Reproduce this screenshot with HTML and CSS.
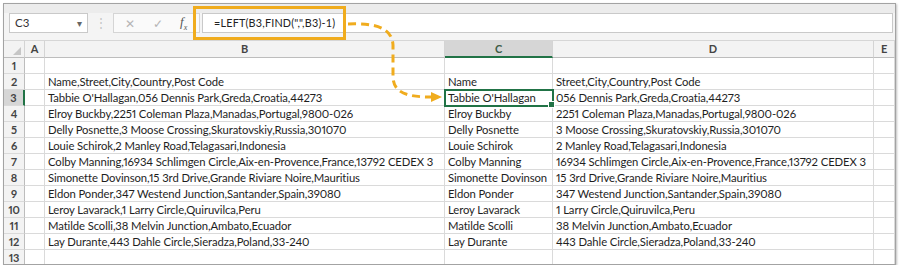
FILE: index.html
```html
<!DOCTYPE html>
<html lang="en">
<head>
    <meta charset="UTF-8">
    <title>LEFT / FIND - Excel</title>
    <link rel="stylesheet" href="styles.css">
</head>
<body>
    <div class="frame">
        <div class="fbar">
            <div class="namebox">C3 <span class="drop">&#9662;</span></div>
            <div class="sep">&#8942;</div>
            <div class="btns">
                <span class="btn">&#10005;</span>
                <span class="btn">&#10003;</span>
                <span class="fx">f<sub>x</sub></span>
            </div>
            <div class="formula">=LEFT(B3,FIND(",",B3)-1)</div>
        </div>

        <div class="sheet">
            <div class="hd corner"><span class="tri"></span></div>
            <div class="hd">A</div>
            <div class="hd">B</div>
            <div class="hd hd-sel">C</div>
            <div class="hd">D</div>
            <div class="hd">E</div>

            <div class="rh">1</div><div class="c"></div><div class="c"></div><div class="c"></div><div class="c"></div><div class="c"></div>
            <div class="rh">2</div><div class="c"></div><div class="c">Name,Street,City,Country,Post Code</div><div class="c">Name</div><div class="c">Street,City,Country,Post Code</div><div class="c"></div>
            <div class="rh rh-sel">3</div><div class="c"></div><div class="c">Tabbie O'Hallagan,056 Dennis Park,Greda,Croatia,44273</div><div class="c sel">Tabbie O'Hallagan</div><div class="c">056 Dennis Park,Greda,Croatia,44273</div><div class="c"></div>
            <div class="rh">4</div><div class="c"></div><div class="c">Elroy Buckby,2251 Coleman Plaza,Manadas,Portugal,9800-026</div><div class="c">Elroy Buckby</div><div class="c">2251 Coleman Plaza,Manadas,Portugal,9800-026</div><div class="c"></div>
            <div class="rh">5</div><div class="c"></div><div class="c">Delly Posnette,3 Moose Crossing,Skuratovskiy,Russia,301070</div><div class="c">Delly Posnette</div><div class="c">3 Moose Crossing,Skuratovskiy,Russia,301070</div><div class="c"></div>
            <div class="rh">6</div><div class="c"></div><div class="c">Louie Schirok,2 Manley Road,Telagasari,Indonesia</div><div class="c">Louie Schirok</div><div class="c">2 Manley Road,Telagasari,Indonesia</div><div class="c"></div>
            <div class="rh">7</div><div class="c"></div><div class="c">Colby Manning,16934 Schlimgen Circle,Aix-en-Provence,France,13792 CEDEX 3</div><div class="c">Colby Manning</div><div class="c">16934 Schlimgen Circle,Aix-en-Provence,France,13792 CEDEX 3</div><div class="c"></div>
            <div class="rh">8</div><div class="c"></div><div class="c">Simonette Dovinson,15 3rd Drive,Grande Riviare Noire,Mauritius</div><div class="c">Simonette Dovinson</div><div class="c">15 3rd Drive,Grande Riviare Noire,Mauritius</div><div class="c"></div>
            <div class="rh">9</div><div class="c"></div><div class="c">Eldon Ponder,347 Westend Junction,Santander,Spain,39080</div><div class="c">Eldon Ponder</div><div class="c">347 Westend Junction,Santander,Spain,39080</div><div class="c"></div>
            <div class="rh">10</div><div class="c"></div><div class="c">Leroy Lavarack,1 Larry Circle,Quiruvilca,Peru</div><div class="c">Leroy Lavarack</div><div class="c">1 Larry Circle,Quiruvilca,Peru</div><div class="c"></div>
            <div class="rh">11</div><div class="c"></div><div class="c">Matilde Scolli,38 Melvin Junction,Ambato,Ecuador</div><div class="c">Matilde Scolli</div><div class="c">38 Melvin Junction,Ambato,Ecuador</div><div class="c"></div>
            <div class="rh">12</div><div class="c"></div><div class="c">Lay Durante,443 Dahle Circle,Sieradza,Poland,33-240</div><div class="c">Lay Durante</div><div class="c">443 Dahle Circle,Sieradza,Poland,33-240</div><div class="c"></div>
            <div class="rh">13</div><div class="c"></div><div class="c"></div><div class="c"></div><div class="c"></div><div class="c"></div>
        </div>

        <!-- surlignage de la formule + fleche vers C3 -->
        <div class="callout"></div>
        <svg class="arrow" width="900" height="267" viewBox="0 0 900 267">
            <path d="M348,24 C374,23 392,27 393,45 L393,76 C393,92 405,97 431,97" fill="none" stroke="#f0ac1e" stroke-width="3" stroke-dasharray="8 5"/>
            <polygon points="431,92 442,97 431,102" fill="#f0ac1e"/>
        </svg>
    </div>
</body>
</html>
```

FILE: styles.css
```css
body {
    margin: 0;
    background: white;
    font-family: Lato, "Open Sans", sans-serif;
}
.frame {
    position: relative;
    box-sizing: border-box;
    width: 893px;
    height: 262px;
    margin: 3px 0 0 3px;
    border: 1px solid #a3a3a3;
    box-shadow: 1px 1px 2px rgba(0,0,0,0.25);
    overflow: hidden;
    background: white;
}
.fbar {
    display: flex;
    align-items: flex-start;
    height: 37px;
    box-sizing: border-box;
    padding: 9px 2px 0 5px;
    background: linear-gradient(#ececec 0, #ececec 9px, #f4f4f4 9px);
    border-bottom: 1px solid #d6d6d6;
}
.namebox {
    position: relative;
    box-sizing: border-box;
    width: 79px;
    height: 20px;
    padding-left: 5px;
    border: 1px solid #c9c9c9;
    background: white;
    font-size: 11.5px;
    line-height: 18px;
    color: #333;
}
.drop {
    position: absolute;
    right: 5px;
    top: 0;
    font-size: 10px;
    color: #666;
}
.sep {
    width: 25px;
    text-align: center;
    font-size: 12px;
    line-height: 20px;
    color: #c4c4c4;
}
.btns {
    display: flex;
    align-items: center;
    box-sizing: border-box;
    width: 87px;
    height: 20px;
    border: 1px solid #d5d5d5;
    background: #fafafa;
}
.btn {
    width: 28px;
    text-align: center;
    font-size: 12px;
    color: #b5b5b5;
}
.btn:first-child {
    margin-left: 2px;
}
.fx {
    margin-left: 8px;
    font-family: "Liberation Serif", serif;
    font-style: italic;
    font-size: 13px;
    color: #555;
}
.fx sub {
    font-size: 8px;
}
.formula {
    flex: 1;
    box-sizing: border-box;
    height: 20px;
    margin-left: 2px;
    padding-left: 11px;
    border: 1px solid #c9c9c9;
    background: white;
    font-size: 10.8px;
    letter-spacing: 0.2px;
    line-height: 18px;
    color: #222;
}
.sheet {
    display: grid;
    grid-template-columns: 21px 20px 400px 108px 321px 21px;
    grid-template-rows: 17px;
    grid-auto-rows: 16px;
    font-size: 11.3px;
    letter-spacing: -0.1px;
    font-variant-numeric: proportional-nums;
}
.hd {
    box-sizing: border-box;
    background: #f3f3f3;
    border-right: 1px solid #d4d4d4;
    border-bottom: 1px solid #bdbdbd;
    text-align: center;
    font-size: 11px;
    font-weight: bold;
    line-height: 16px;
    color: #444;
}
.corner {
    position: relative;
}
.tri {
    position: absolute;
    right: 3px;
    bottom: 2px;
    border-left: 8px solid transparent;
    border-bottom: 8px solid #c6c6c6;
}
.hd-sel {
    background: #d6d6d6;
    border-bottom: 2px solid #217346;
    color: #3d5c47;
}
.rh {
    box-sizing: border-box;
    background: #f3f3f3;
    border-right: 1px solid #bdbdbd;
    border-bottom: 1px solid #dadada;
    text-align: center;
    font-size: 11px;
    font-weight: bold;
    line-height: 15px;
    color: #444;
}
.rh-sel {
    background: #d6d6d6;
    border-right: 2px solid #217346;
}
.c {
    box-sizing: border-box;
    padding-left: 3px;
    border-right: 1px solid #dadada;
    border-bottom: 1px solid #dadada;
    white-space: nowrap;
    overflow: hidden;
    line-height: 15px;
    color: #1e1e1e;
}
.sel {
    position: relative;
    overflow: visible;
    outline: 2px solid #217346;
    outline-offset: -1px;
}
.sel::after {
    content: "";
    position: absolute;
    right: -3px;
    bottom: -3px;
    width: 5px;
    height: 5px;
    background: #217346;
    border: 1px solid white;
}
.callout {
    position: absolute;
    left: 189px;
    top: 2px;
    width: 153px;
    height: 34px;
    box-sizing: border-box;
    border: 3px solid #f0ac1e;
}
.arrow {
    position: absolute;
    left: -4px;
    top: -4px;
    pointer-events: none;
}
```
